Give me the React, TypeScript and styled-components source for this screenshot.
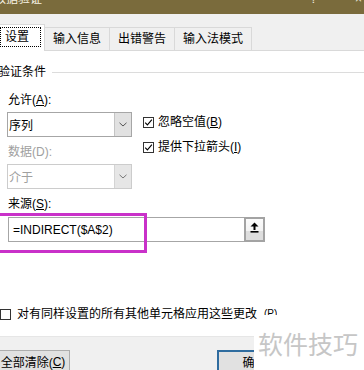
import React from 'react';
import styled, { createGlobalStyle } from 'styled-components';

const Global = createGlobalStyle`
  html, body { margin: 0; padding: 0; background: #fff; }
  body {
    font-family: "Liberation Sans", "Noto Sans CJK SC", sans-serif;
    font-size: 12px;
    color: #000;
  }
`;

const Dialog = styled.div`
  position: relative;
  width: 364px;
  height: 370px;
  overflow: hidden;
  display: flex;
  flex-direction: column;
  background: #fff;
`;

const TitleBar = styled.div`
  flex: none;
  height: 14px;
  background: #7a6b3c;
  overflow: hidden;
  display: flex;
  align-items: flex-start;
  color: #f6f1e2;
  font-size: 12px;
  line-height: 14px;
`;

const TitleText = styled.span`
  margin: -8px 0 0 -6px;
`;

const Spacer = styled.div`
  flex: 1;
`;

const TitleGlyph = styled.span<{ $mr: number }>`
  margin-top: -8px;
  margin-right: ${p => p.$mr}px;
`;

const TabStrip = styled.div`
  flex: none;
  box-sizing: border-box;
  height: 37px;
  background: #f0f0f0;
  border-bottom: 1px solid #d9d9d9;
  display: flex;
  align-items: flex-end;
`;

const Tab = styled.div<{ $active?: boolean }>`
  box-sizing: border-box;
  height: ${p => (p.$active ? 27 : 23)}px;
  margin-bottom: ${p => (p.$active ? -1 : 0)}px;
  margin-left: ${p => (p.$active ? -2 : -1)}px;
  padding: ${p => (p.$active ? '2px 3px 0 1px' : '0 8px')};
  border: 1px solid #d9d9d9;
  border-bottom: none;
  background: ${p => (p.$active ? '#fff' : '#f0f0f0')};
  display: flex;
  align-items: ${p => (p.$active ? 'flex-start' : 'center')};
  line-height: 14px;
  position: relative;
  z-index: ${p => (p.$active ? 2 : 1)};
`;

const FocusRing = styled.span`
  box-sizing: border-box;
  width: 41px;
  height: 20px;
  border: 1px dotted #000;
  padding-left: 4px;
  display: flex;
  align-items: center;
`;

const Content = styled.div`
  flex: 1;
  display: flex;
  flex-direction: column;
  padding: 14px 0 0 7px;
`;

const GroupHeader = styled.div`
  display: flex;
  align-items: center;
  gap: 6px;
  margin-left: -9px;
  height: 14px;
  line-height: 14px;
  &::after {
    content: '';
    flex: 1;
    height: 1px;
    background: #dcdcdc;
  }
`;

const FormGrid = styled.div`
  display: grid;
  grid-template-columns: 125px 1fr;
  column-gap: 11px;
  margin-top: 14px;
`;

const Label = styled.div<{ $row: number; $disabled?: boolean; $gap?: number }>`
  grid-column: 1 / -1;
  grid-row: ${p => p.$row};
  height: 14px;
  line-height: 14px;
  margin-top: ${p => p.$gap ?? 0}px;
  padding-left: 1px;
  color: ${p => (p.$disabled ? '#a0a0a0' : '#000')};
`;

const U = styled.span`
  text-decoration: underline;
  text-underline-offset: 1px;
`;

const Select = styled.div<{ $row: number; $disabled?: boolean }>`
  grid-column: 1;
  grid-row: ${p => p.$row};
  box-sizing: border-box;
  height: 25px;
  margin-top: 5px;
  display: flex;
  border: 1px solid ${p => (p.$disabled ? '#cccccc' : '#a6a6a6')};
  color: ${p => (p.$disabled ? '#a0a0a0' : '#000')};
  background: #fff;
`;

const SelectValue = styled.div`
  flex: 1;
  padding-left: 1px;
  display: flex;
  align-items: center;
`;

const SelectArrow = styled.div<{ $disabled?: boolean }>`
  width: 16px;
  background: ${p => (p.$disabled ? '#e6e6e6' : '#e1e1e1')};
  border-left: 1px solid ${p => (p.$disabled ? '#d4d4d4' : '#c4c4c4')};
  display: flex;
  align-items: center;
  justify-content: center;
`;

const CheckColumn = styled.div`
  grid-column: 2;
  grid-row: 2 / span 3;
  align-self: start;
  margin-top: 8px;
  display: flex;
  flex-direction: column;
  gap: 11px;
`;

const CheckItem = styled.div<{ $ml?: number }>`
  display: flex;
  align-items: center;
  gap: 4px;
  height: 14px;
  line-height: 14px;
  margin-left: ${p => p.$ml ?? 0}px;
  white-space: nowrap;
`;

const SourceRow = styled.div`
  grid-column: 1 / -1;
  grid-row: 6;
  position: relative;
  display: flex;
  width: 257px;
  height: 25px;
  margin: 6px 0 0 1px;
`;

const SourceInput = styled.div`
  flex: 1;
  box-sizing: border-box;
  border: 1px solid #a6a6a6;
  border-right: none;
  padding-left: 4px;
  display: flex;
  align-items: center;
  white-space: nowrap;
`;

const CollapseButton = styled.div`
  box-sizing: border-box;
  width: 21px;
  border: 2px solid #a3a3a3;
  background: linear-gradient(#fbfbfb 0%, #f3f3f3 55%, #dedede 56%, #dedede 100%);
  display: flex;
  align-items: flex-start;
  justify-content: center;
  padding-top: 3px;
`;

const Highlight = styled.div`
  position: absolute;
  left: -12px;
  top: -4px;
  width: 151px;
  height: 40px;
  box-sizing: border-box;
  border: 3px solid #c931c9;
  pointer-events: none;
`;

const BottomCheck = styled(CheckItem)`
  margin-top: 65px;
  gap: 6px;
`;

const ClippedHint = styled.span`
  align-self: flex-start;
  display: inline-block;
  height: 7px;
  overflow: hidden;
  font-size: 10px;
  line-height: 11px;
  margin: 1px 0 0 1px;
`;

const Footer = styled.div`
  flex: none;
  box-sizing: border-box;
  height: 34px;
  background: #f0f0f0;
  border-top: 1px solid #e6e6e6;
  display: flex;
  align-items: flex-start;
  padding-top: 13px;
`;

const Button = styled.div<{ $default?: boolean; $w: number; $ml: number }>`
  box-sizing: border-box;
  width: ${p => p.$w}px;
  height: 23px;
  margin-left: ${p => p.$ml}px;
  border: ${p => (p.$default ? '2px solid #2f6c9f' : '1px solid #adadad')};
  background: #e1e1e1;
  display: flex;
  align-items: center;
  justify-content: center;
  white-space: nowrap;
`;

const Watermark = styled.div`
  position: absolute;
  right: 0;
  bottom: 0;
  width: 110px;
  height: 44px;
  box-sizing: border-box;
  padding: 2px 0 0 4px;
  background: #fff;
  color: #c6c6c6;
  font-family: "Noto Sans CJK SC", sans-serif;
  font-size: 25px;
  line-height: 30px;
  letter-spacing: 0;
  white-space: nowrap;
`;

const CheckBox = ({ checked }: { checked?: boolean }) => (
  <svg width="11" height="11" viewBox="0 0 11 11" style={{ flex: 'none' }}>
    <rect x="0.5" y="0.5" width="10" height="10" fill="#fff" stroke="#333" />
    {checked && <path d="M2.2 5.6 L4.4 7.9 L8.9 2.6" fill="none" stroke="#000" strokeWidth="1.1" />}
  </svg>
);

const Chevron = ({ color }: { color: string }) => (
  <svg width="8" height="5" viewBox="0 0 8 5">
    <path d="M0.5 0.8 L4 4 L7.5 0.8" fill="none" stroke={color} strokeWidth="1" />
  </svg>
);

const UpArrow = () => (
  <svg width="9" height="11" viewBox="0 0 9 11">
    <path d="M4.5 0.5 L8.5 4.5 H5.5 V8 H3.5 V4.5 H0.5 Z" fill="#000" />
    <rect x="0.5" y="9" width="8" height="1.6" fill="#000" />
  </svg>
);

export default function App() {
  return (
    <>
      <Global />
      <Dialog>
        <TitleBar>
          <TitleText>数据验证</TitleText>
          <Spacer />
          <TitleGlyph $mr={38}>?</TitleGlyph>
          <TitleGlyph $mr={2}>×</TitleGlyph>
        </TitleBar>
        <TabStrip>
          <Tab $active>
            <FocusRing>设置</FocusRing>
          </Tab>
          <Tab>输入信息</Tab>
          <Tab>出错警告</Tab>
          <Tab>输入法模式</Tab>
        </TabStrip>
        <Content>
          <GroupHeader>验证条件</GroupHeader>
          <FormGrid>
            <Label $row={1}>
              允许(<U>A</U>):
            </Label>
            <Select $row={2}>
              <SelectValue>序列</SelectValue>
              <SelectArrow>
                <Chevron color="#555" />
              </SelectArrow>
            </Select>
            <CheckColumn>
              <CheckItem>
                <CheckBox checked />
                <span>
                  忽略空值(<U>B</U>)
                </span>
              </CheckItem>
              <CheckItem>
                <CheckBox checked />
                <span>
                  提供下拉箭头(<U>I</U>)
                </span>
              </CheckItem>
            </CheckColumn>
            <Label $row={3} $disabled $gap={8}>
              数据(D):
            </Label>
            <Select $row={4} $disabled>
              <SelectValue>介于</SelectValue>
              <SelectArrow $disabled>
                <Chevron color="#777" />
              </SelectArrow>
            </Select>
            <Label $row={5} $gap={8}>
              来源(<U>S</U>):
            </Label>
            <SourceRow>
              <SourceInput>=INDIRECT($A$2)</SourceInput>
              <CollapseButton>
                <UpArrow />
              </CollapseButton>
              <Highlight />
            </SourceRow>
          </FormGrid>
          <BottomCheck $ml={-7}>
            <CheckBox />
            <span>对有同样设置的所有其他单元格应用这些更改</span>
            <ClippedHint>(P)</ClippedHint>
          </BottomCheck>
        </Content>
        <Footer>
          <Button $w={74} $ml={-4}>
            全部清除(<U>C</U>)
          </Button>
          <Button $default $w={75} $ml={147}>
            确定
          </Button>
        </Footer>
        <Watermark>软件技巧</Watermark>
      </Dialog>
    </>
  );
}
